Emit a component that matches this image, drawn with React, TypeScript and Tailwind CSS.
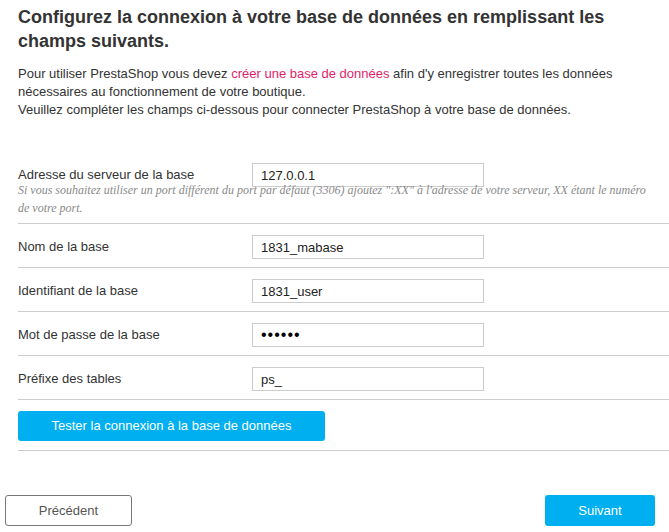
import React from "react";

const fields = [
  { label: "Nom de la base", value: "1831_mabase", type: "text" },
  { label: "Identifiant de la base", value: "1831_user", type: "text" },
  { label: "Mot de passe de la base", value: "123456", type: "password" },
  { label: "Préfixe des tables", value: "ps_", type: "text" },
];

const inputCls =
  "h-[24px] w-[232px] border border-[#cccccc] bg-white px-[8px] text-[#222] outline-none";

export default function App() {
  return (
    <div className="min-h-[532px] w-[669px] overflow-hidden bg-white font-['Liberation_Sans',Arial,sans-serif] text-[#333]">
      <div className="pl-[18px]">
        <h2 className="w-[640px] pt-[5px] text-[18px] font-bold leading-[24px] text-[#333]">
          Configurez la connexion à votre base de données en remplissant les
          champs suivants.
        </h2>

        <p className="mt-[12px] w-[620px] text-[13px] leading-[18px]">
          Pour utiliser PrestaShop vous devez{" "}
          <a href="#" className="text-[#df1e6a]">
            créer une base de données
          </a>{" "}
          afin d'y enregistrer toutes les données nécessaires au fonctionnement
          de votre boutique.
          <br />
          Veuillez compléter les champs ci-dessous pour connecter PrestaShop à
          votre base de données.
        </p>

        <div className="mt-[34px]">
          <div className="border-b border-[#cccccc] pt-[10px] pb-[6px]">
            <div className="flex items-center">
              <label className="w-[234px] text-[13px]">
                Adresse du serveur de la base
              </label>
              <input className={inputCls + " text-[13px]"} defaultValue="127.0.0.1" />
            </div>
            <p className="mt-[-6px] pr-[16px] font-['Liberation_Serif',Georgia,serif] text-[12px] italic leading-[18px] text-[#8a8a8a]">
              Si vous souhaitez utiliser un port différent du port par défaut
              (3306) ajoutez ":XX" à l'adresse de votre serveur, XX étant le
              numéro de votre port.
            </p>
          </div>

          {fields.map((f) => (
            <div
              key={f.label}
              className="flex items-center border-b border-[#cccccc] pt-[11px] pb-[8px]"
            >
              <label className="w-[234px] text-[13px]">{f.label}</label>
              <input
                className={
                  inputCls +
                  (f.type === "password"
                    ? " text-[16px] tracking-[1px] text-black"
                    : " text-[13px]")
                }
                type={f.type}
                defaultValue={f.value}
              />
            </div>
          ))}

          <div className="border-b border-[#cccccc] pt-[11px] pb-[9px]">
            <button className="h-[30px] w-[307px] rounded-[3px] bg-[#00aff0] text-[13px] text-white">
              Tester la connexion à la base de données
            </button>
          </div>
        </div>
      </div>

      <div className="mt-[44px] flex justify-between pl-[5px] pr-[14px]">
        <button className="h-[31px] w-[127px] rounded-[3px] border border-[#777] bg-white text-[13px] text-[#555]">
          Précédent
        </button>
        <button className="h-[31px] w-[110px] rounded-[3px] bg-[#00aff0] text-[13px] text-white">
          Suivant
        </button>
      </div>
    </div>
  );
}
